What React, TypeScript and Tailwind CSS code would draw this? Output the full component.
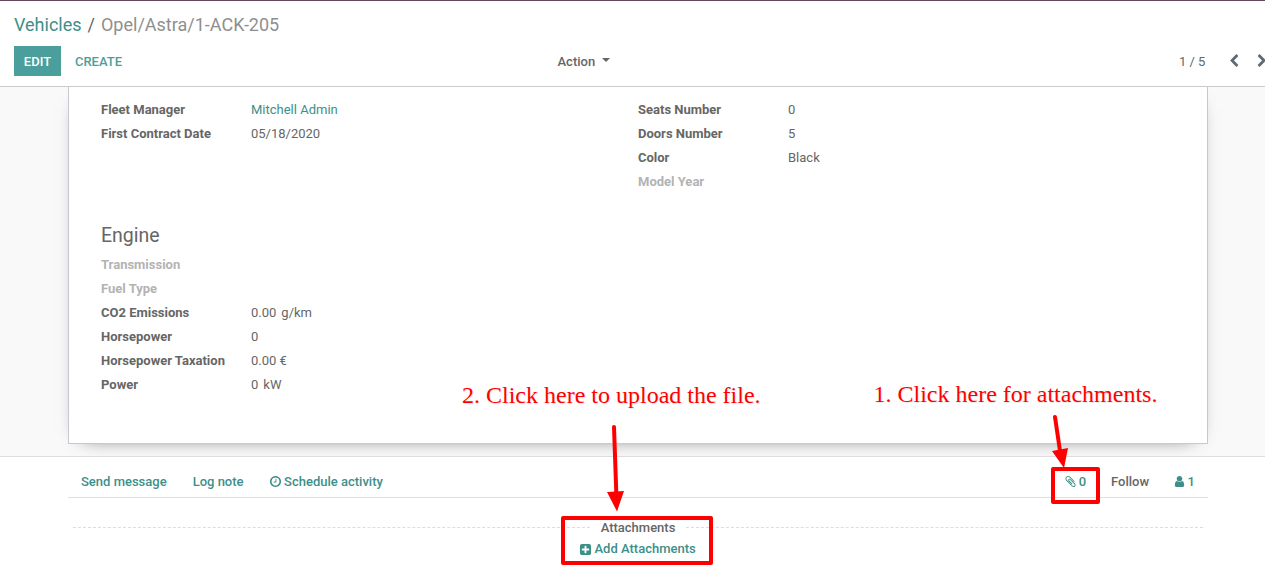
import React from "react";

const ICONS = {
  clock:
    "M1024 544v448q0 14-9 23t-23 9h-320q-14 0-23-9t-9-23v-64q0-14 9-23t23-9h224v-352q0-14 9-23t23-9h64q14 0 23 9t9 23zm416 352q0-148-73-273t-198-198-273-73-273 73-198 198-73 273 73 273 198 198 273 73 273-73 198-198 73-273zm224 0q0 209-103 385.5t-279.5 279.5-385.5 103-385.5-103-279.5-279.5-103-385.5 103-385.5 279.5-279.5 385.5-103 385.5 103 279.5 279.5 103 385.5z",
  plusSquare:
    "M1408 960v-128q0-26-19-45t-45-19h-320v-320q0-26-19-45t-45-19h-128q-26 0-45 19t-19 45v320h-320q-26 0-45 19t-19 45v128q0 26 19 45t45 19h320v320q0 26 19 45t45 19h128q26 0 45-19t19-45v-320h320q26 0 45-19t19-45zm256-544v960q0 119-84.5 203.5t-203.5 84.5h-960q-119 0-203.5-84.5t-84.5-203.5v-960q0-119 84.5-203.5t203.5-84.5h960q119 0 203.5 84.5t84.5 203.5z",
  user:
    "M1536 1399q0 109-62.5 187t-150.5 78h-854q-88 0-150.5-78t-62.5-187q0-85 8.5-160.5t31.5-152 58.5-131 94-89 134.5-34.5q131 128 313 128t313-128q76 0 134.5 34.5t94 89 58.5 131 31.5 152 8.5 160.5zm-256-887q0 159-112.5 271.5t-271.5 112.5-271.5-112.5-112.5-271.5 112.5-271.5 271.5-112.5 271.5 112.5 112.5 271.5z",
  paperclip:
    "M1596 1385q0 117-79 196t-196 79q-135 0-235-100l-777-776q-113-115-113-271 0-159 110-270t269-111q158 0 273 113l605 606q10 10 10 22 0 16-30.5 46.5t-46.5 30.5q-13 0-23-10l-606-607q-79-77-181-77-106 0-179 75t-73 181q0 105 76 181l776 777q63 63 145 63 64 0 106-42t42-106q0-82-63-145l-581-581q-26-24-60-24-29 0-48 19t-19 48q0 32 25 59l410 410q10 10 10 22 0 16-31 47t-47 31q-12 0-22-10l-410-410q-63-61-63-149 0-82 57-139t139-57q88 0 149 63l581 581q100 98 100 235z",
  chevronLeft:
    "M1427 301l-531 531 531 531q19 19 19 45t-19 45l-166 166q-19 19-45 19t-45-19l-742-742q-19-19-19-45t19-45l742-742q19-19 45-19t45 19l166 166q19 19 19 45t-19 45z",
  chevronRight:
    "M1363 877l-742 742q-19 19-45 19t-45-19l-166-166q-19-19-19-45t19-45l531-531-531-531q-19-19-19-45t19-45l166-166q19-19 45-19t45 19l742 742q19 19 19 45t-19 45z",
};

type IconProps = { name: keyof typeof ICONS; size?: string; className?: string };

function Icon({ name, size = "h-[14px] w-[14px]", className = "" }: IconProps) {
  return (
    <svg viewBox="0 0 1792 1792" className={`shrink-0 fill-current ${size} ${className}`}>
      <path d={ICONS[name]} />
    </svg>
  );
}

type FieldProps = { label: string; value?: string; unit?: string; link?: boolean };

function Field({ label, value, unit, link }: FieldProps) {
  return (
    <div className="flex h-6 items-center">
      <span className={`w-[150px] font-bold ${value ? "" : "text-[#b3b3b3]"}`}>{label}</span>
      <span className={link ? "text-[#3d8f8a]" : ""}>{value}</span>
      {unit && <span className="ml-[5px]">{unit}</span>}
    </div>
  );
}

export default function App() {
  return (
    <div className="relative flex h-[583px] w-[1265px] flex-col overflow-hidden bg-white font-['Roboto',sans-serif] text-[13px] leading-5 text-[#666666]">
      <header className="relative z-10 h-[87px] shrink-0 border-t border-b border-t-[#68465f] border-b-[#cacaca] bg-white">
        <div className="flex h-[45px] items-center pt-[2px] pl-[14px] text-[18px]">
          <a className="text-[#3d8f8a]">Vehicles</a>
          <span className="mx-[6px]">/</span>
          <span className="text-[#8f8f8f]">Opel/Astra/1-ACK-205</span>
        </div>
        <div className="flex h-[30px] items-center font-medium whitespace-nowrap">
          <button className="ml-[14px] h-[30px] w-[47px] shrink-0 bg-[#4a9f9c] pt-px text-white">EDIT</button>
          <button className="ml-[13px] w-[49px] shrink-0 pt-px text-[#4a9f9c]">CREATE</button>
          <button className="ml-[434.5px] flex w-[53px] shrink-0 items-center pt-px">
            Action
            <span className="mb-[3px] ml-[7px] border-x-[4px] border-t-4 border-x-transparent border-t-[#666666]" />
          </button>
          <span className="ml-[568.5px] w-[27px] shrink-0 pt-px font-normal">1 / 5</span>
          <Icon name="chevronLeft" className="ml-[21px] text-[#5f6a73]" />
          <Icon name="chevronRight" className="ml-[14px] text-[#5f6a73]" />
        </div>
      </header>

      <main className="h-[369px] shrink-0 overflow-hidden bg-[#f9f9f9] px-[68px]">
        <div className="flex h-[357px] w-[1140px] flex-col border border-t-0 border-[#c8c8d3] bg-white pt-[11px] pl-8 shadow-[0_5px_20px_-15px_#000000]">
          <div className="flex">
            <div className="w-[537px]">
              <Field label="Fleet Manager" value="Mitchell Admin" link />
              <Field label="First Contract Date" value="05/18/2020" />
            </div>
            <div>
              <Field label="Seats Number" value="0" />
              <Field label="Doors Number" value="5" />
              <Field label="Color" value="Black" />
              <Field label="Model Year" />
            </div>
          </div>
          <h2 className="mt-[27px] h-[32px] text-[19.5px] leading-[30px]">Engine</h2>
          <Field label="Transmission" />
          <Field label="Fuel Type" />
          <Field label="CO2 Emissions" value="0.00" unit="g/km" />
          <Field label="Horsepower" value="0" />
          <Field label="Horsepower Taxation" value="0.00 €" />
          <Field label="Power" value="0" unit="kW" />
        </div>
      </main>

      <section className="flex-1 border-t border-[#dcdce2] px-[68px]">
        <div className="flex h-[41px] w-[1140px] items-center border-b border-[#dddfe2] pt-[9px] pr-[13px] pl-[13px] font-medium text-[#3d8f8a]">
          <button>Send message</button>
          <button className="ml-[26px]">Log note</button>
          <button className="ml-[25px] flex items-center">
            <Icon name="clock" size="h-[13px] w-[13px]" className="mr-[2.5px]" />
            Schedule activity
          </button>
          <button className="ml-auto flex items-center">
            <Icon name="paperclip" size="h-[13px] w-[13px]" className="mr-[2px]" />0
          </button>
          <button className="ml-[25px] text-[#666666]">Follow</button>
          <button className="ml-6 flex items-center">
            <Icon name="user" size="h-[13px] w-[13px]" className="mr-[1.5px]" />1
          </button>
        </div>
        <div className="mt-5 ml-[5px] flex w-[1130px] items-center font-medium">
          <span className="mb-px flex-1 border-t border-dashed border-[#dddddd]" />
          <span className="px-[11px]">Attachments</span>
          <span className="mb-px flex-1 border-t border-dashed border-[#dddddd]" />
        </div>
        <button className="ml-[511px] mt-px flex items-center font-medium text-[#3d8f8a]">
          <Icon name="plusSquare" size="h-[13px] w-[13px]" className="mr-[2.5px]" />
          Add Attachments
        </button>
      </section>

      <div className="pointer-events-none absolute inset-0 z-20 font-['Liberation_Serif',serif] text-[24px] leading-7 text-[#ff0000] [text-shadow:1px_1px_1px_#00000018]">
        <p className="absolute top-[381px] left-[462px] whitespace-nowrap">2. Click here to upload the file.</p>
        <p className="absolute top-[380px] left-[873.5px] whitespace-nowrap">1. Click here for attachments.</p>
        <div className="absolute top-[516px] left-[561px] h-[49px] w-[152px] rounded-[2px] border-4 border-[#ff0000]" />
        <div className="absolute top-[467px] left-[1051px] h-[37px] w-[49px] rounded-[2px] border-4 border-[#ff0000]" />
        <svg className="absolute inset-0 h-[583px] w-[1265px] fill-[#ff0000] stroke-[#ff0000]">
          <path d="M614 427L616.3 493M1055 417L1060 451" strokeWidth="4" strokeLinecap="round" />
          <path d="M607 492L624 491L617 511.500zM1052 451L1068 448L1064 468z" stroke="none" />
        </svg>
      </div>
    </div>
  );
}
